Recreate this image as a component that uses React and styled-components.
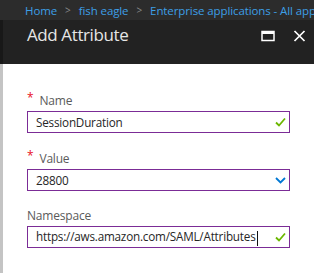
import React from 'react';
import styled, { createGlobalStyle } from 'styled-components';

const GlobalStyle = createGlobalStyle`
  html, body {
    margin: 0;
    padding: 0;
    background: #ffffff;
    overflow: hidden;
  }
  body {
    font-family: "Open Sans", "Noto Sans", sans-serif;
  }
`;

const Page = styled.div`
  width: 314px;
  height: 273px;
  display: flex;
  flex-direction: column;
  overflow: hidden;
`;

const Breadcrumbs = styled.div`
  height: 20px;
  background: #2c2c2c;
  display: flex;
  align-items: center;
  padding-left: 25px;
  white-space: nowrap;
  overflow: hidden;
  font-size: 11.5px;
  letter-spacing: -0.1px;
`;

const Crumb = styled.span`
  color: #3d9fe6;
`;

const Sep = styled.span`
  color: #8a8a8a;
  font-size: 10px;
  margin: 0 8px;
`;

const Header = styled.div`
  height: 44px;
  box-sizing: border-box;
  background: #222222;
  border-left: 3px solid #181818;
  display: flex;
  align-items: flex-start;
  padding: 4px 8px 0 24px;
`;

const Title = styled.h1`
  flex: 1;
  margin: 0;
  color: #e6e6e6;
  font-size: 17px;
  line-height: 22px;
  font-weight: 400;
  letter-spacing: -0.4px;
`;

const HeaderButton = styled.button`
  background: none;
  border: 0;
  padding: 0;
  margin-left: ${p => p.gap}px;
  margin-top: 5px;
  display: flex;
  align-items: center;
  justify-content: center;
  width: 14px;
  height: 13px;
`;

const Body = styled.div`
  flex: 1;
  background: #ffffff;
  border-left: 3px solid #c4c4c4;
  padding: 28px 24px 0 24px;
  display: flex;
  flex-direction: column;
`;

const Field = styled.div`
  display: flex;
  flex-direction: column;
  margin-bottom: ${p => p.spacing}px;
`;

const Label = styled.label`
  display: flex;
  align-items: center;
  gap: 4px;
  height: 16px;
  margin-bottom: 3px;
  color: #5a5a5a;
  font-size: 12px;
  letter-spacing: -0.2px;
`;

const Star = styled.span`
  color: #e81123;
  font-size: 12px;
  line-height: 1;
  position: relative;
  top: -2px;
  margin-right: 2px;
`;

const InputBox = styled.div`
  height: 22px;
  box-sizing: border-box;
  border: 1px solid #7b2c96;
  display: flex;
  align-items: center;
  padding: 0 3px 0 8px;
`;

const InputText = styled.span`
  flex: 1;
  color: #262626;
  font-size: 11.7px;
  letter-spacing: -0.2px;
  white-space: nowrap;
  overflow: hidden;
`;

const Caret = styled.span`
  display: inline-block;
  width: 1px;
  height: 15px;
  background: #111;
  vertical-align: middle;
  margin-left: 1px;
`;

const IconSlot = styled.span`
  width: 12px;
  height: 12px;
  display: flex;
  align-items: center;
  justify-content: center;
`;

const Check = () => (
  <svg width="11" height="10" viewBox="0 0 11 10">
    <path d="M1 5.5 L4 8.5 L10 1.5" fill="none" stroke="#6bb700" strokeWidth="1.8" />
  </svg>
);

const Chevron = () => (
  <svg width="11" height="7" viewBox="0 0 11 7">
    <path d="M1 1 L5.5 5.5 L10 1" fill="none" stroke="#0078d4" strokeWidth="1.8" />
  </svg>
);

const MaxIcon = () => (
  <svg width="14" height="12" viewBox="0 0 14 12">
    <rect x="1" y="1.5" width="12" height="9" fill="none" stroke="#fff" strokeWidth="1.5" />
    <rect x="1" y="1" width="12" height="3" fill="#fff" />
  </svg>
);

const CloseIcon = () => (
  <svg width="13" height="12" viewBox="0 0 13 12">
    <path d="M1.5 1 L11.5 11 M11.5 1 L1.5 11" stroke="#fff" strokeWidth="1.7" />
  </svg>
);

const App = () => {
  const fields = [
    { label: 'Name', required: true, value: 'SessionDuration', icon: <Check />, spacing: 17 },
    { label: 'Value', required: true, value: '28800', icon: <Chevron />, spacing: 16 },
    { label: 'Namespace', required: false, value: 'https://aws.amazon.com/SAML/Attributes', icon: <Check />, caret: true, spacing: 0 },
  ];

  return (
    <Page>
      <GlobalStyle />
      <Breadcrumbs>
        <Crumb>Home</Crumb>
        <Sep>&gt;</Sep>
        <Crumb>fish eagle</Crumb>
        <Sep>&gt;</Sep>
        <Crumb>Enterprise applications - All applications</Crumb>
      </Breadcrumbs>
      <Header>
        <Title>Add Attribute</Title>
        <HeaderButton gap={0}><MaxIcon /></HeaderButton>
        <HeaderButton gap={17}><CloseIcon /></HeaderButton>
      </Header>
      <Body>
        {fields.map(f => (
          <Field key={f.label} spacing={f.spacing}>
            <Label>
              {f.required && <Star>*</Star>}
              {f.label}
            </Label>
            <InputBox>
              <InputText>
                {f.value}
                {f.caret && <Caret />}
              </InputText>
              <IconSlot>{f.icon}</IconSlot>
            </InputBox>
          </Field>
        ))}
      </Body>
    </Page>
  );
};

export default App;
